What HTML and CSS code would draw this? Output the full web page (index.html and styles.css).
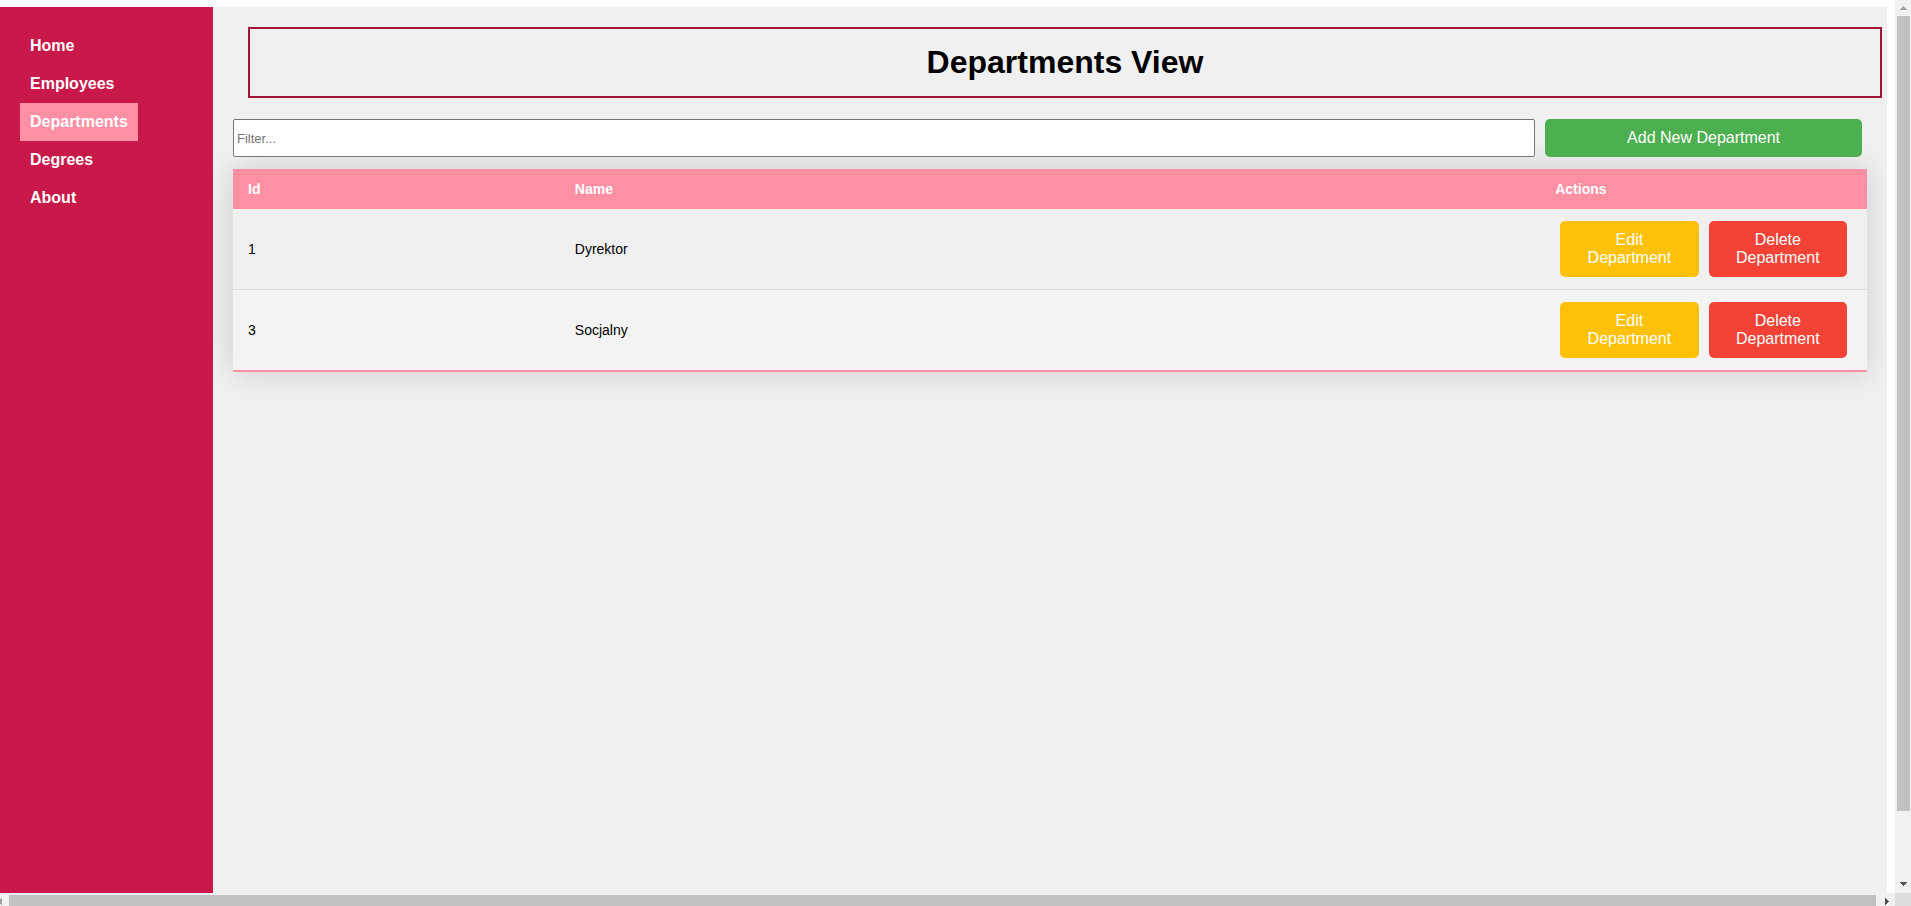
FILE: index.html
```html
<!DOCTYPE html>
<html lang="en">
<head>
<meta charset="utf-8">
<title>Departments View</title>
<link rel="stylesheet" href="styles.css">
</head>
<body>
<div class="window">
  <div class="app">
    <nav class="sidebar">
      <a class="nav-link" href="#home">Home</a>
      <a class="nav-link" href="#employees">Employees</a>
      <a class="nav-link active" href="#departments">Departments</a>
      <a class="nav-link" href="#degrees">Degrees</a>
      <a class="nav-link" href="#about">About</a>
    </nav>
    <main class="content">
      <h1 class="title">Departments View</h1>
      <div class="toolbar">
        <input class="filter" type="text" placeholder="Filter..." aria-label="Filter departments">
        <button class="btn btn-add" type="button">Add New Department</button>
      </div>
      <table class="table">
        <thead>
          <tr><th class="col-id">Id</th><th class="col-name">Name</th><th class="col-actions">Actions</th></tr>
        </thead>
        <tbody>
          <tr>
            <td>1</td>
            <td>Dyrektor</td>
            <td><div class="actions"><button class="btn btn-edit" type="button">Edit Department</button><button class="btn btn-delete" type="button">Delete Department</button></div></td>
          </tr>
          <tr>
            <td>3</td>
            <td>Socjalny</td>
            <td><div class="actions"><button class="btn btn-edit" type="button">Edit Department</button><button class="btn btn-delete" type="button">Delete Department</button></div></td>
          </tr>
        </tbody>
      </table>
    </main>
  </div>
  <div class="vbar" aria-hidden="true">
    <svg width="16" height="16" viewBox="0 0 16 16"><path fill="#a3a3a3" d="M5 10V9H6V8H7V7H8V6H9V7H10V8H11V9H12V10Z"/></svg>
    <div class="thumb-v"></div>
    <div class="track-v"></div>
    <svg width="16" height="16" viewBox="0 0 16 16"><path fill="#505050" d="M5 5H12V6H11V7H10V8H9V9H8V8H7V7H6V6H5Z"/></svg>
  </div>
  <div class="hbar" aria-hidden="true">
    <svg width="9" height="13" viewBox="0 0 9 13"><path fill="#a3a3a3" d="M0 6H1V5H2V12H1V11H0Z"/></svg>
    <div class="thumb-h"></div>
    <svg width="19" height="13" viewBox="0 0 19 13"><path fill="#505050" d="M9 5H10V6H11V7H12V8H13V9H12V10H11V11H10V12H9Z"/></svg>
  </div>
  <div class="corner"></div>
</div>
</body>
</html>
```
FILE: styles.css
```css
* {
  box-sizing: border-box;
}

body {
  margin: 0;
  background: #fff;
  font-family: "Liberation Sans", Arial, sans-serif;
  font-size: 16px;
  line-height: 18px;
  color: #000;
}

.window {
  display: grid;
  grid-template-columns: minmax(0, 1fr) 16px;
  grid-template-rows: minmax(0, 1fr) 13px;
  height: 100vh;
}

.app {
  display: flex;
  padding: 7px 8px 0 0;
  min-height: 0;
}

.sidebar {
  flex: 0 0 213px;
  display: flex;
  flex-direction: column;
  align-items: flex-start;
  padding: 20px;
  background: #c9184a;
}

.nav-link {
  padding: 10px;
  color: #fff;
  font-weight: bold;
  text-decoration: none;
}

.nav-link.active {
  background: #ff8fa3;
}

.content {
  flex: 1;
  min-width: 0;
  overflow: hidden;
  padding: 20px;
  background: #f0f0f0;
}

.title {
  margin: 0 -15px 21px 15px;
  padding: 15px;
  border: 2px solid #a4133c;
  font-size: 32px;
  line-height: 37px;
  text-align: center;
}

.toolbar {
  display: grid;
  grid-template-columns: 4fr 1fr;
  margin-bottom: 12px;
}

.filter {
  margin-right: 5px;
  padding: 3px;
  border: 1px solid #767676;
  border-radius: 2px;
  background: #fff;
  font-family: inherit;
  font-size: 13px;
}

.filter::placeholder {
  color: #757575;
}

.btn {
  padding: 10px 20px;
  border: 0;
  border-radius: 5px;
  color: #fff;
  font: inherit;
  text-align: center;
  cursor: pointer;
}

.btn-add {
  margin: 0 5px;
  background: #4caf50;
}

.btn-edit {
  background: #ffc107;
}

.btn-delete {
  background: #f44336;
}

.table {
  width: 100%;
  table-layout: fixed;
  border-collapse: separate;
  border-spacing: 0;
  font-size: 14px;
  line-height: 16px;
  box-shadow: 0 0 30px rgba(0, 0, 0, 0.15);
}

.table th,
.table td {
  padding: 12px 15px;
  text-align: left;
}

.table th {
  background: #ff8fa3;
  color: #fff;
}

.col-id,
.col-actions {
  width: 20%;
}

.col-name {
  width: 60%;
}

.table td {
  border-bottom: 1px solid #ddd;
  background: #f0f0f0;
}

.table tbody tr:nth-child(even) td {
  background: #f3f3f3;
}

.table tbody tr:last-child td {
  border-bottom: 2px solid #ff8fa3;
}

.actions {
  display: flex;
  gap: 10px;
  padding: 0 5px;
  font-size: 16px;
  line-height: 18px;
}

.actions .btn {
  flex: 1 1 0;
  min-width: 0;
}

.vbar {
  display: flex;
  flex-direction: column;
  background: #f1f1f1;
}

.vbar svg {
  flex: none;
}

.thumb-v {
  flex: 795;
  margin: 0 1px 0 2px;
  background: #c1c1c1;
}

.track-v {
  flex: 66;
}

.hbar {
  display: flex;
  background: #f1f1f1;
}

.thumb-h {
  flex: 1;
  margin-top: 2px;
  background: #c1c1c1;
}

.corner {
  background: #dcdcdc;
}
```
